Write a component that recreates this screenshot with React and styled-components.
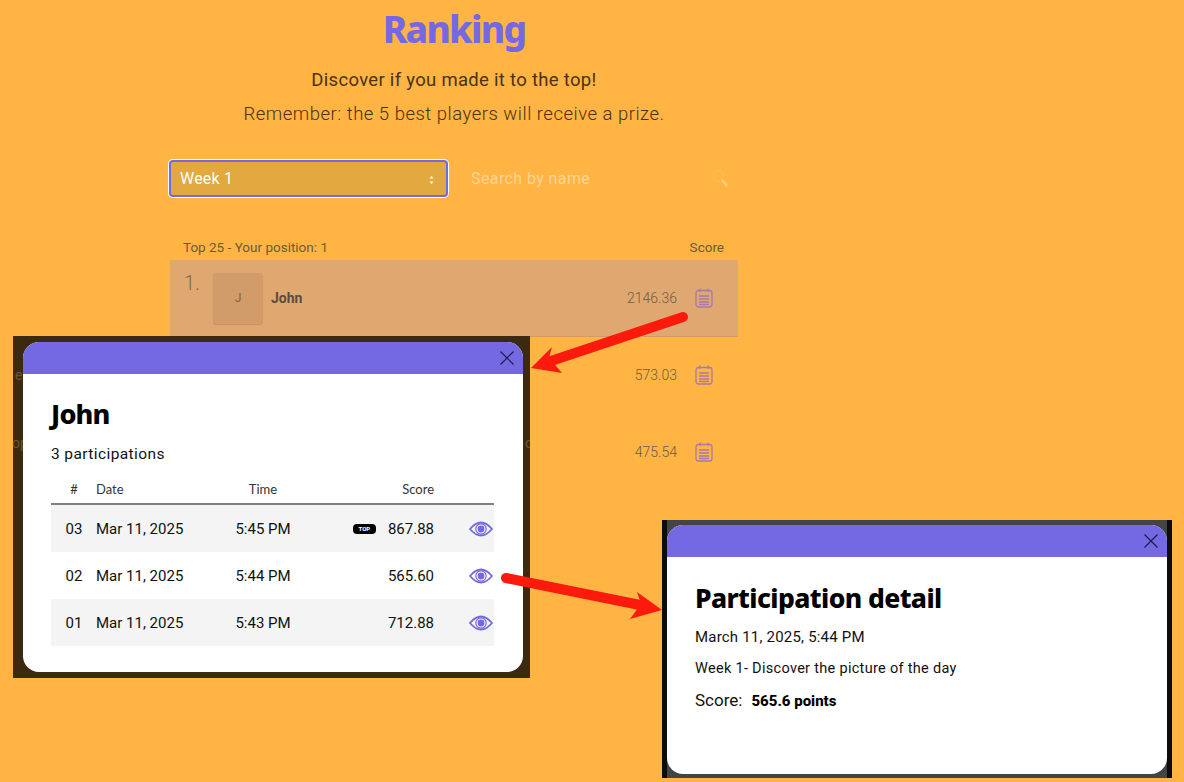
import React from "react";
import styled, { createGlobalStyle } from "styled-components";

const SANS = `Roboto, "Open Sans", sans-serif`;
const HEAD = `"Noto Sans", "Open Sans", sans-serif`;
const PURPLE = "#7569e3";

const Global = createGlobalStyle`
  html, body { margin: 0; padding: 0; background: #ffb444; }
  body { font-family: ${SANS}; }
  * { box-sizing: border-box; }
`;

const Page = styled.div`
  position: relative;
  width: 1184px;
  height: 782px;
  padding-left: 170px;
  overflow: hidden;
  background: #ffb444;
`;
const Column = styled.main`
  width: 568px;
  display: flex;
  flex-direction: column;
`;
const Title = styled.h1`
  margin: 6px 0 0;
  height: 46px;
  line-height: 46px;
  text-align: center;
  font-family: ${HEAD};
  font-weight: 800;
  font-size: 37px;
  letter-spacing: -1.7px;
  color: ${PURPLE};
`;
const Lead = styled.p`
  margin: ${(p) => p.$top}px 0 0;
  height: 24px;
  line-height: 24px;
  text-align: center;
  font-size: ${(p) => p.$size}px;
  font-weight: ${(p) => p.$weight};
  letter-spacing: ${(p) => p.$spacing}px;
  color: #4a3210;
`;
const Filters = styled.div`
  display: flex;
  align-items: center;
  margin: 34px 0 0 -1px;
`;
const SelectBox = styled.div`
  width: 279px;
  height: 37px;
  padding: 0 11px 0 9px;
  display: flex;
  align-items: center;
  justify-content: space-between;
  background: #e1a93f;
  border: 2px solid ${PURPLE};
  border-radius: 4px;
  box-shadow: 0 0 0 1px #fff;
  color: #fff;
  font-size: 16px;
  letter-spacing: 0.2px;
`;
const SearchBox = styled.div`
  flex: 1;
  height: 37px;
  padding: 0 9px 0 23px;
  display: flex;
  align-items: center;
  justify-content: space-between;
  color: #ffd495;
  font-size: 16px;
  letter-spacing: 0.4px;
`;
const ListHead = styled.div`
  display: flex;
  justify-content: space-between;
  margin-top: 40px;
  margin-bottom: 3px;
  padding: 0 14px 0 13px;
  height: 20px;
  line-height: 20px;
  font-size: 13.500px;
  color: #6d5a35;
`;
const Row = styled.div`
  height: 77px;
  display: flex;
  align-items: center;
  padding-left: 14px;
  background: ${(p) => (p.$me ? "#e0a871" : "transparent")};
  border-bottom: 1px solid ${(p) => (p.$me ? "#cf9c66" : "transparent")};
`;
const Rank = styled.span`
  width: 29px;
  align-self: flex-start;
  margin-top: 11px;
  font-size: 20px;
  font-weight: 300;
  color: #7d6a4c;
`;
const Avatar = styled.span`
  width: 50px;
  height: 51px;
  display: flex;
  align-items: center;
  justify-content: center;
  border-radius: 3px;
  background: #d19c6a;
  box-shadow: 0 1px 1px rgba(120, 80, 40, 0.25);
  font-size: 12px;
  color: #7d6545;
`;
const Name = styled.span`
  flex: 1;
  margin-left: 8px;
  font-size: 14px;
  font-weight: 700;
  color: #5d4c3c;
`;
const Points = styled.span`
  font-size: 14px;
  font-weight: 300;
  color: #6d5d45;
`;
const IconSlot = styled.span`
  width: 61px;
  padding-right: 7px;
  display: flex;
  justify-content: center;
`;

const Modal = styled.section`
  position: absolute;
  left: ${(p) => p.$x}px;
  top: ${(p) => p.$y}px;
  width: ${(p) => p.$w}px;
  height: ${(p) => p.$h}px;
  padding: ${(p) => p.$pad};
  background: ${(p) => p.$back};
  overflow: hidden;
`;
const Ghost = styled.span`
  position: absolute;
  left: ${(p) => p.$x}px;
  top: ${(p) => p.$y}px;
  font-size: 14px;
  line-height: 14px;
  color: #6b5530;
`;
const Dialog = styled.div`
  position: relative;
  height: 100%;
  background: #fff;
  border-radius: 16px;
  overflow: hidden;
  display: flex;
  flex-direction: column;
`;
const DialogBar = styled.header`
  flex: none;
  height: 32px;
  padding: 9px 9px 0 0;
  display: flex;
  justify-content: flex-end;
  background: ${PURPLE};
`;
const DialogBody = styled.div`
  padding: ${(p) => p.$pad};
  color: #000;
`;
const DialogTitle = styled.h2`
  margin: 0;
  font-family: ${HEAD};
  font-size: ${(p) => p.$size}px;
  line-height: 36px;
  font-weight: 800;
  letter-spacing: ${(p) => p.$spacing}px;
  color: #000;
`;
const Count = styled.p`
  margin: 10px 0 0;
  font-size: 15.500px;
  line-height: 24px;
  letter-spacing: 0.4px;
  color: #111;
`;
const Table = styled.div`
  margin: 9px 0 0;
`;
const Cells = styled.div`
  display: grid;
  grid-template-columns: 45px 124px 86px 128px 60px;
  align-items: center;
  height: ${(p) => p.$h}px;
  font-size: ${(p) => p.$fs}px;
  font-family: ${(p) => (p.$head ? `Lato, ${SANS}` : SANS)};
  color: ${(p) => (p.$head ? "#333" : "#111")};
  background: ${(p) => (p.$shade ? "#f4f4f4" : "transparent")};
  border-bottom: ${(p) => (p.$head ? "2px solid #808080" : "0")};
`;
const Num = styled.span`
  text-align: center;
  padding-left: 1px;
`;
const Cell = styled.span`
  text-align: ${(p) => p.$align || "left"};
`;
const ScoreCell = styled.span`
  display: flex;
  justify-content: flex-end;
  align-items: center;
  gap: 12px;
`;
const TopBadge = styled.span`
  width: 23px;
  height: 10px;
  border-radius: 4px;
  background: #000;
  color: #fff;
  font-size: 6px;
  font-weight: 800;
  line-height: 10px;
  text-align: center;
`;
const EyeSlot = styled.span`
  display: flex;
  justify-content: flex-end;
  padding-right: 1px;
`;
const DetailLine = styled.p`
  margin: ${(p) => p.$top}px 0 0;
  font-size: ${(p) => p.$size}px;
  line-height: 22px;
  letter-spacing: ${(p) => p.$spacing || 0}px;
  color: #111;
`;
const Strong = styled.strong`
  margin-left: 9px;
  font-size: 15px;
  font-weight: 800;
  color: #000;
`;
const Overlay = styled.svg`
  position: absolute;
  left: 0;
  top: 0;
  pointer-events: none;
`;

const Chevrons = () => (
  <svg width="7" height="10" viewBox="0 0 7 10" fill="#fff" style={{ marginTop: 3 }}>
    <path d="M3.500 1 5.500 3.500H1.500z" />
    <path d="M3.500 9 5.500 6.500H1.500z" />
  </svg>
);
const Magnifier = () => (
  <svg width="18" height="20" viewBox="0 0 18 20" fill="none" stroke="#ffbe5e" strokeWidth="1">
    <circle cx="7" cy="7" r="5.500" />
    <path d="M11 11l5 6" strokeWidth="2" stroke="#ffcf8a" />
  </svg>
);
const Sheet = () => (
  <svg width="18" height="20" viewBox="0 0 18 20" fill="none" stroke="#a978ad" strokeWidth="1.300">
    <rect x="1" y="2.500" width="16" height="16.500" rx="2.500" />
    <path d="M5 0.500v3.500M13 0.500v3.500" />
    <path d="M4 8h10M4 11h10M4 14h10M4 16.500h10" />
  </svg>
);
const Eye = () => (
  <svg width="24" height="16" viewBox="0 0 24 16" fill="none" stroke={PURPLE}>
    <path d="M1 8C5 3.200 8.500 1.500 12 1.500S19 3.200 23 8c-4 4.800-7.500 6.500-11 6.500S5 12.800 1 8z" strokeWidth="1.800" />
    <circle cx="12" cy="8" r="5.200" strokeWidth="1.200" />
    <circle cx="12" cy="8" r="3.400" fill={PURPLE} stroke="none" />
  </svg>
);
const Close = () => (
  <svg width="14" height="14" viewBox="0 0 14 14" stroke="#1d1748" strokeWidth="1.100">
    <path d="M0.500 0.500l13 13M13.500 0.500l-13 13" />
  </svg>
);

const participations = [
  { n: "03", date: "Mar 11, 2025", time: "5:45 PM", score: "867.88", top: true, shade: true },
  { n: "02", date: "Mar 11, 2025", time: "5:44 PM", score: "565.60" },
  { n: "01", date: "Mar 11, 2025", time: "5:43 PM", score: "712.88", shade: true },
];

export default function App() {
  return (
    <Page>
      <Global />
      <Column>
        <Title>Ranking</Title>
        <Lead $top={16} $size={18.500} $weight={400} $spacing={0.3}>Discover if you made it to the top!</Lead>
        <Lead $top={10} $size={18.500} $weight={300} $spacing={0.5}>Remember: the 5 best players will receive a prize.</Lead>
        <Filters>
          <SelectBox>Week 1<Chevrons /></SelectBox>
          <SearchBox>Search by name<Magnifier /></SearchBox>
        </Filters>
        <ListHead>
          <span>Top 25 - Your position: 1</span>
          <span>Score</span>
        </ListHead>
        <Row $me>
          <Rank>1.</Rank>
          <Avatar>J</Avatar>
          <Name>John</Name>
          <Points>2146.36</Points>
          <IconSlot><Sheet /></IconSlot>
        </Row>
        <Row>
          <Name />
          <Points>573.03</Points>
          <IconSlot><Sheet /></IconSlot>
        </Row>
        <Row>
          <Name />
          <Points>475.54</Points>
          <IconSlot><Sheet /></IconSlot>
        </Row>
      </Column>

      <Modal $x={13} $y={336} $w={517} $h={342} $pad="6px 7px 6px 10px" $back="#3c2a10">
        <Ghost $x={2} $y={32}>e</Ghost>
        <Ghost $x={-1} $y={100}>op</Ghost>
        <Ghost $x={512} $y={100}>o</Ghost>
        <Dialog>
          <DialogBar><Close /></DialogBar>
          <DialogBody $pad="22px 29px 0 28px">
            <DialogTitle $size={27} $spacing={-0.8}>John</DialogTitle>
            <Count>3 participations</Count>
            <Table>
              <Cells $head $h={30} $fs={13}>
                <Num>#</Num>
                <Cell>Date</Cell>
                <Cell $align="center">Time</Cell>
                <Cell $align="right">Score</Cell>
                <span />
              </Cells>
              {participations.map((p) => (
                <Cells key={p.n} $h={47} $fs={15} $shade={p.shade}>
                  <Num>{p.n}</Num>
                  <Cell>{p.date}</Cell>
                  <Cell $align="center">{p.time}</Cell>
                  <ScoreCell>{p.top && <TopBadge>TOP</TopBadge>}{p.score}</ScoreCell>
                  <EyeSlot><Eye /></EyeSlot>
                </Cells>
              ))}
            </Table>
          </DialogBody>
        </Dialog>
      </Modal>

      <Modal $x={662} $y={520} $w={510} $h={258} $pad="5px 5px 4px 5px" $back="linear-gradient(90deg,#0c0c0c 5px,#444 5px,#444 505px,#0c0c0c 505px)">
        <Dialog>
          <DialogBar><Close /></DialogBar>
          <DialogBody $pad="23px 28px 0 28px">
            <DialogTitle $size={26.500} $spacing={-0.6}>Participation detail</DialogTitle>
            <DetailLine $top={10} $size={15} $spacing={0.2}>March 11, 2025, 5:44 PM</DetailLine>
            <DetailLine $top={10} $size={14.500} $spacing={0.3}>Week 1- Discover the picture of the day</DetailLine>
            <DetailLine $top={9} $size={17}>Score:<Strong>565.6 points</Strong></DetailLine>
          </DialogBody>
        </Dialog>
      </Modal>

      <Overlay width="1184" height="782" viewBox="0 0 1184 782">
        <path d="M683 317 L548 362" stroke="#fb1a0c" strokeWidth="10" strokeLinecap="round" fill="none" />
        <path d="M531 368 L552 347 L549 358 L562 373 Z" fill="#fb1a0c" />
        <path d="M506 578 L645 606" stroke="#fb1a0c" strokeWidth="10" strokeLinecap="round" fill="none" />
        <path d="M662 610 L630 619 L641 604 L637 592 Z" fill="#fb1a0c" />
      </Overlay>
    </Page>
  );
}
